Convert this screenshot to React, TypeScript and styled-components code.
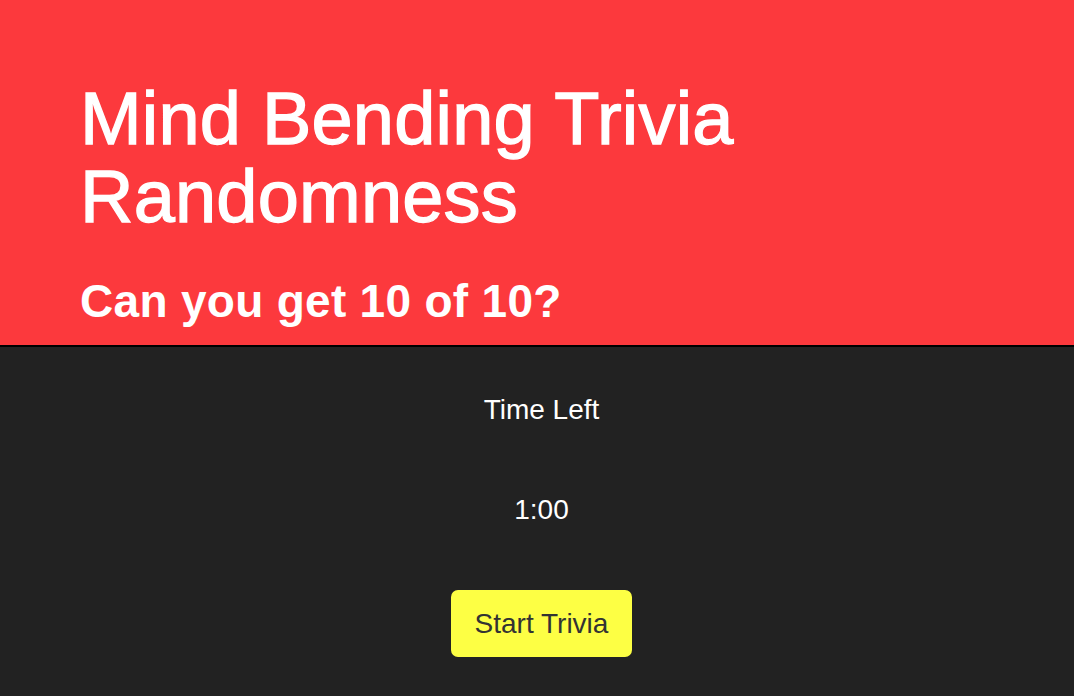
import React from "react";
import styled, { createGlobalStyle } from "styled-components";

const GlobalStyle = createGlobalStyle`
  html, body {
    margin: 0;
    padding: 0;
    background: #222222;
    font-family: "Liberation Sans", Arial, Helvetica, sans-serif;
  }
  * { box-sizing: border-box; }
`;

const Page = styled.div`
  min-height: 100vh;
  display: flex;
  flex-direction: column;
  background: #222222;
`;

const Header = styled.header`
  background: #fc393d;
  color: #ffffff;
  padding: 80px 80px 18px;
  border-bottom: 2px solid #000000;
`;

const Title = styled.h1`
  margin: 0;
  font-size: 74px;
  line-height: 78px;
  font-weight: 400;
  letter-spacing: 0.2px;
  -webkit-text-stroke: 1.3px #ffffff;
  max-width: 720px;
`;

const Subtitle = styled.h2`
  margin: 40px 0 0;
  font-size: 46px;
  line-height: 51px;
  font-weight: 700;
  letter-spacing: 0.3px;
`;

const Main = styled.main`
  display: flex;
  flex-direction: column;
  align-items: center;
  padding: 47px 0 0 9px;
  color: #ffffff;
`;

const Label = styled.div<{ $gap?: number }>`
  font-size: 28px;
  line-height: 32px;
  margin-bottom: ${(p) => p.$gap ?? 0}px;
`;

const StartButton = styled.button`
  font-family: inherit;
  font-size: 28px;
  line-height: 33px;
  color: #333333;
  background: #fdff44;
  border: none;
  border-radius: 7px;
  padding: 17px 24px;
  cursor: pointer;
`;

export default function App() {
  return (
    <>
      <GlobalStyle />
      <Page>
        <Header>
          <Title>Mind Bending Trivia Randomness</Title>
          <Subtitle>Can you get 10 of 10?</Subtitle>
        </Header>
        <Main>
          <Label $gap={68}>Time Left</Label>
          <Label $gap={64}>1:00</Label>
          <StartButton>Start Trivia</StartButton>
        </Main>
      </Page>
    </>
  );
}
